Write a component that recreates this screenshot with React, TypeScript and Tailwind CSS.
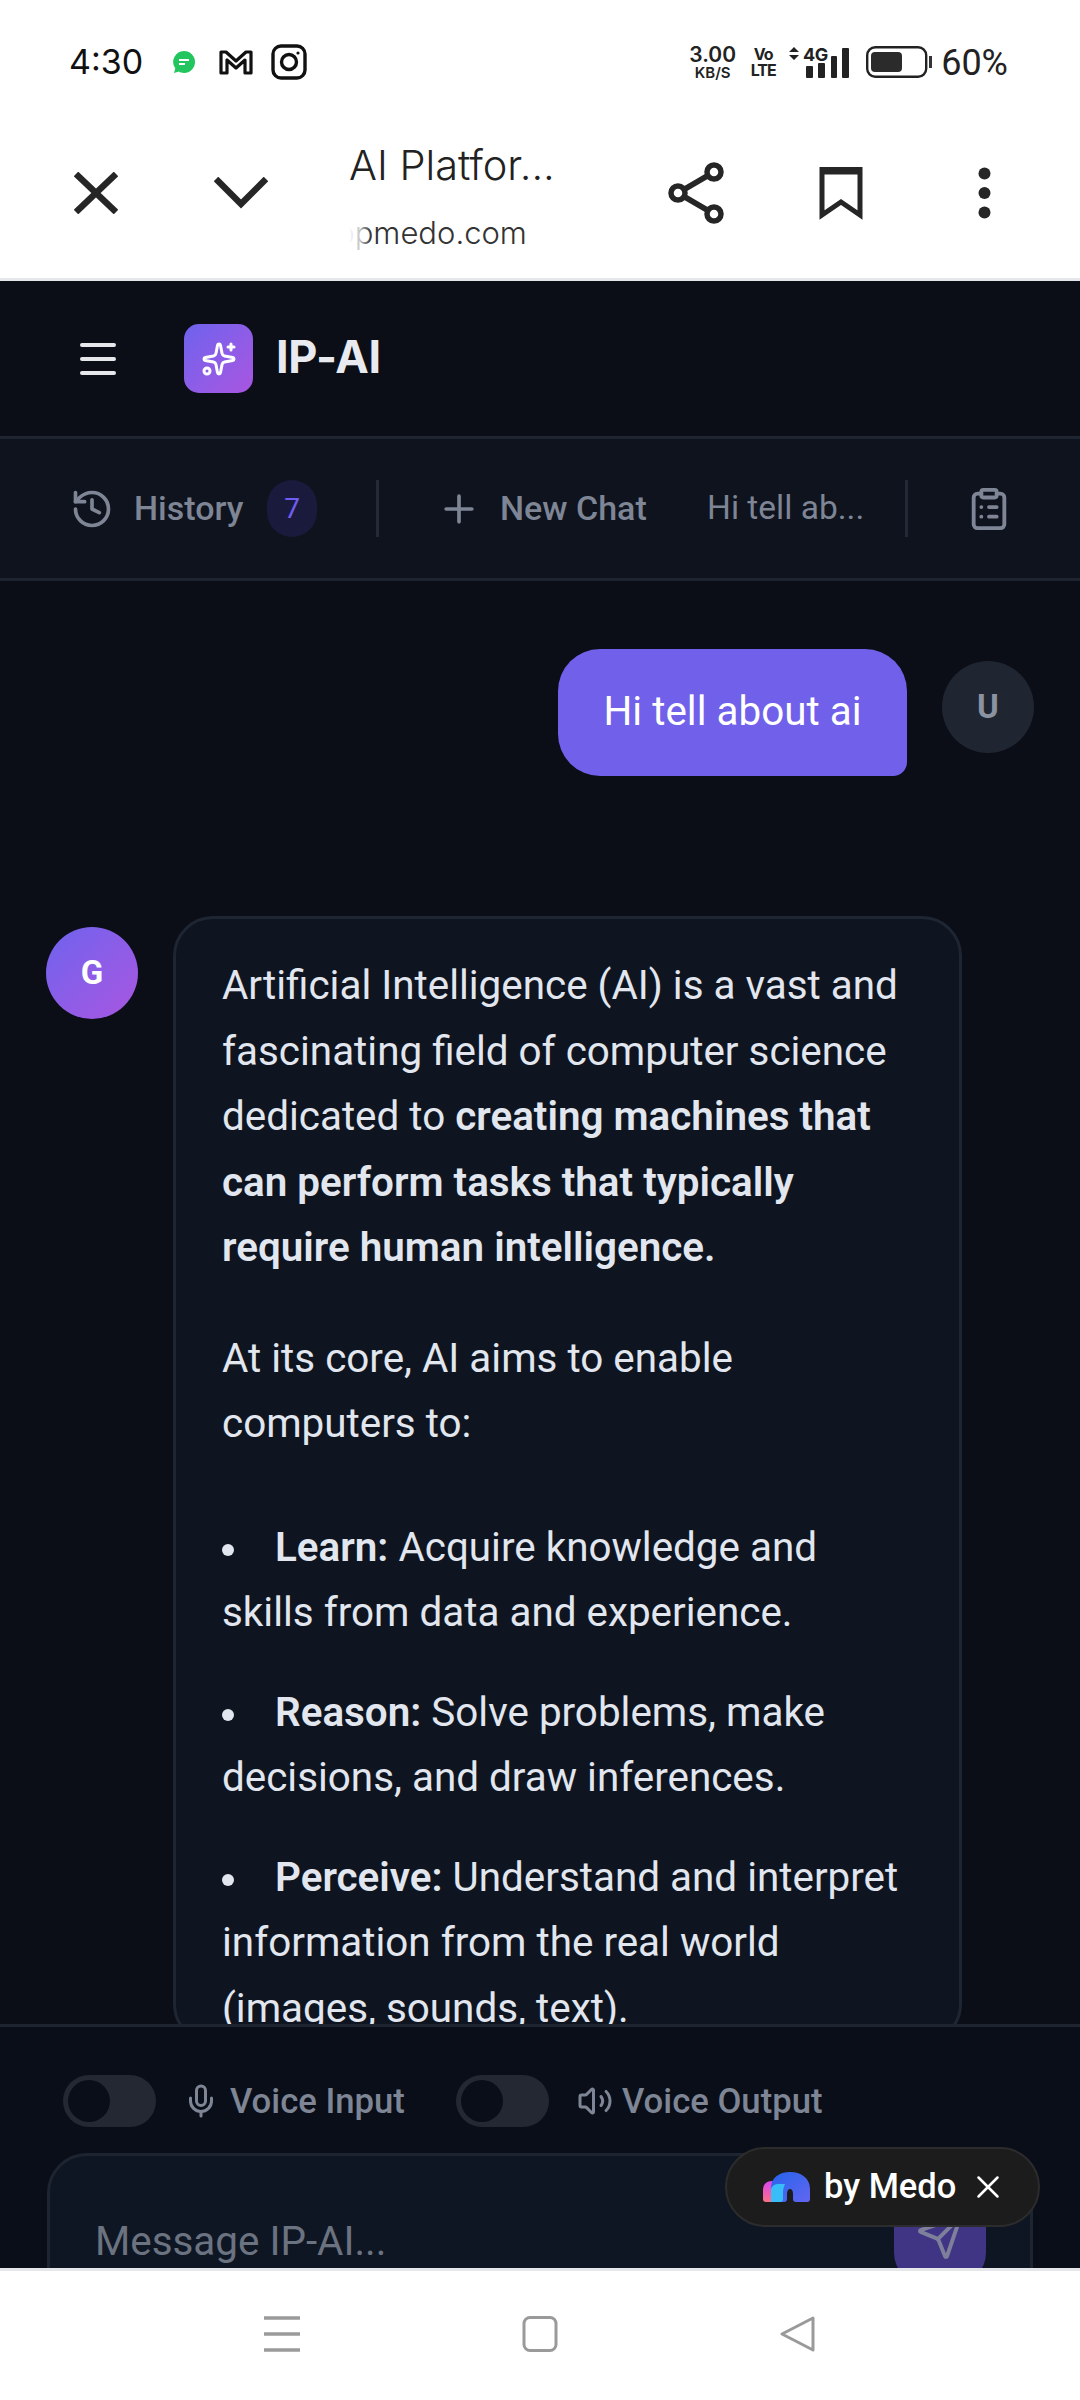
import React from "react";
import { History, Plus, ClipboardList, Mic, Volume2, Send, X, Menu, Sparkles } from "lucide-react";

function StatusBar() {
  return (
    <div className="h-[125px] pt-[42px] pl-[69px] pr-[72px] flex items-start justify-between [font-family:Inter,sans-serif] text-[#111]">
      <div className="flex items-center h-[40px]">
        <span className="text-[34px] leading-[40px] w-[103px]">4:30</span>
        <svg width="24" height="24" viewBox="0 0 24 24" className="mr-[23px]">
          <path d="M12 1a11 11 0 0 1 0 22c-2 0-4-.4-5-1.4L2 23l1.3-4.6A11 11 0 0 1 12 1z" fill="#22c55e" />
          <path d="M7 10h10M7 14h6" stroke="#fff" strokeWidth="2" />
        </svg>
        <svg width="34" height="26" viewBox="0 0 34 26" fill="none" stroke="#111" strokeWidth="3.2" strokeLinejoin="round" className="mr-[18px]">
          <path d="M2 24V3h5l10 9 10-9h5v21h-6V11l-9 8-9-8v13z" />
        </svg>
        <svg width="36" height="36" viewBox="0 0 36 36" fill="none" stroke="#111" strokeWidth="3.4">
          <rect x="2" y="2" width="32" height="32" rx="8" />
          <circle cx="18" cy="18" r="7.5" />
          <circle cx="27" cy="9" r="1.6" fill="#111" stroke="none" />
        </svg>
      </div>
      <div className="flex items-center h-[40px] text-[#222]">
        <div className="flex flex-col items-center w-[49px] mr-[15px] font-semibold">
          <span className="text-[21px] leading-[20px]">3.00</span>
          <span className="text-[15px] leading-[15px]">KB/S</span>
        </div>
        <div className="flex flex-col items-center w-[22px] mr-[15px] font-bold text-[16px] leading-[16px] tracking-[-1px]">
          <span>Vo</span>
          <span>LTE</span>
        </div>
        <svg width="60" height="32" viewBox="0 0 60 32" className="mr-[17px]" fill="#222">
          <path d="M0 6 5 1 10 6zM0 9 5 14 10 9z" />
          <text x="14" y="15" fontSize="18" fontWeight="700" fontFamily="Inter" letterSpacing="-0.5">4G</text>
          <rect x="17" y="20" width="7" height="12" rx="1" />
          <rect x="29" y="17" width="7" height="15" rx="1" />
          <rect x="42" y="10" width="6" height="22" rx="1" />
          <rect x="53" y="2" width="7" height="30" rx="1" />
        </svg>
        <svg width="66" height="32" viewBox="0 0 66 32" className="mr-[9px]" fill="none">
          <rect x="1.2" y="1.2" width="59" height="29.6" rx="8" stroke="#222" strokeWidth="2.4" />
          <rect x="5" y="6" width="31" height="20" rx="4" fill="#2b2b2b" />
          <rect x="63" y="10" width="3" height="12" fill="#333" />
        </svg>
        <span className="text-[36px] leading-[40px] font-normal mt-[2px] [font-family:Roboto,sans-serif]">60%</span>
      </div>
    </div>
  );
}

function BrowserBar() {
  return (
    <div className="h-[156px] shrink-0 flex items-center pl-[74px] pb-[8px] border-b-[3px] border-[#e5e7eb] [font-family:Inter,sans-serif]">
      <svg width="44" height="42" viewBox="0 0 44 42" fill="none" stroke="#262626" strokeWidth="6.5" className="-mt-[9px]">
        <path d="M2 2 42 40M42 2 2 40" />
      </svg>
      <svg width="54" height="32" viewBox="0 0 54 32" fill="none" stroke="#262626" strokeWidth="6.5" className="ml-[96px] -mt-[9px]">
        <path d="M2 2 27 27 52 2" />
      </svg>
      <div className="ml-[81px] w-[206px] relative overflow-hidden">
        <div className="text-[41.5px] leading-[50px] font-light text-[#222] whitespace-nowrap -mt-[3px]">AI Platfor...</div>
        <div className="text-[31px] leading-[40px] font-light text-[#333] whitespace-nowrap mt-[23px] -ml-[13px]">ppmedo.com</div>
        <div className="absolute left-0 bottom-0 w-[22px] h-[40px] bg-gradient-to-r from-white via-white/70 to-transparent" />
      </div>
      <svg width="56" height="60" viewBox="0 0 56 60" fill="none" stroke="#262626" strokeWidth="5.5" className="ml-[114px] -mt-[9px] overflow-visible">
        <circle cx="45" cy="9" r="7" />
        <circle cx="9" cy="30" r="7" />
        <circle cx="45" cy="51" r="7" />
        <path d="M15 26.5 39 12.5M15 33.5 39 47.5" />
      </svg>
      <svg width="44" height="54" viewBox="0 0 44 54" fill="none" stroke="#262626" strokeWidth="5" className="ml-[94px] -mt-[9px]">
        <path d="M3 3.5H41V49L22 36 3 49Z" />
        <path d="M3 5H41" strokeWidth="7" />
      </svg>
      <svg width="13" height="52" viewBox="0 0 13 52" fill="#262626" className="ml-[115px] -mt-[9px]">
        <circle cx="6.5" cy="6.5" r="6" />
        <circle cx="6.5" cy="26" r="6" />
        <circle cx="6.5" cy="45.5" r="6" />
      </svg>
    </div>
  );
}

function AppHeader() {
  return (
    <div className="h-[158px] shrink-0 border-b-[3px] border-[#1e2430] bg-[#0b0e17] flex items-center pl-[74px]">
      <Menu size={48} strokeWidth={2} className="text-[#e5e7eb] mr-[62px]" />
      <div className="w-[69px] h-[69px] rounded-[15px] bg-gradient-to-br from-[#6d62ee] to-[#a855e0] flex items-center justify-center mr-[23px]">
        <Sparkles size={36} strokeWidth={2} className="text-white" />
      </div>
      <span className="text-[45px] font-bold text-[#e8eaf0] [font-family:Inter,sans-serif] tracking-[-0.4px] -mt-[3px]">IP-AI</span>
    </div>
  );
}

function ToolBar() {
  return (
    <div className="h-[142px] shrink-0 border-b-[3px] border-[#1e2430] bg-[#0e131e] flex items-center pl-[70px] text-[#7e8595] [font-family:Roboto,sans-serif] font-medium text-[34px]">
      <History size={44} strokeWidth={2} className="mr-[20px]" />
      <span className="w-[111px] mr-[22px]">History</span>
      <div className="w-[50px] h-[57px] rounded-full bg-[#1a1b3c] text-[#6f5df2] flex items-center justify-center text-[28px] font-normal mr-[59px]">7</div>
      <div className="w-[3px] h-[57px] bg-[#232936] mr-[64px]" />
      <Plus size={44} strokeWidth={2} className="mr-[19px] -ml-[6px]" />
      <span className="w-[148px] whitespace-nowrap mr-[59px]">New Chat</span>
      <span className="w-[157px] whitespace-nowrap font-normal text-[33.5px] mr-[41px]">Hi tell ab...</span>
      <div className="w-[3px] h-[57px] bg-[#232936] mr-[58px]" />
      <ClipboardList size={46} strokeWidth={2} />
    </div>
  );
}

function Dot() {
  return <span className="inline-block w-[12px] h-[12px] rounded-full bg-[#e2e6ef] mr-[41px] align-[5px]" />;
}

function ChatArea() {
  return (
    <div className="flex-1 min-h-0 overflow-hidden bg-[#0b0d17] text-[#e2e6ef] [font-family:Roboto,sans-serif]">
      <div className="flex justify-end items-start pt-[68px] pr-[46px]">
        <div className="w-[349px] h-[127px] rounded-[42px] rounded-br-[14px] bg-[#7060ea] text-white text-[40.4px] flex items-center justify-center">Hi tell about ai</div>
        <div className="w-[92px] h-[92px] rounded-full ml-[35px] mt-[12px] bg-[#1f2631] text-[#8b92a0] font-bold text-[33px] flex items-center justify-center">U</div>
      </div>
      <div className="flex items-start pt-[140px] pl-[46px]">
        <div className="w-[92px] h-[92px] rounded-full mt-[11px] mr-[35px] bg-gradient-to-br from-[#6d62ee] to-[#a855e0] text-white font-bold text-[33px] flex items-center justify-center">G</div>
        <div className="w-[789px] rounded-[40px] border-[3px] border-[#1f2633] bg-[#0e1520] pl-[46px] pr-[52px] pt-[34px] text-[40.4px] leading-[65.5px]">
          <p>Artificial Intelligence (AI) is a vast and fascinating field of computer science dedicated to <b className="font-semibold">creating machines that can perform tasks that typically require human intelligence.</b></p>
          <p className="mt-[45px]">At its core, AI aims to enable computers to:</p>
          <ul className="mt-[58px] space-y-[34px]">
            <li><Dot /><b className="font-semibold">Learn:</b> Acquire knowledge and skills from data and experience.</li>
            <li><Dot /><b className="font-semibold">Reason:</b> Solve problems, make decisions, and draw inferences.</li>
            <li><Dot /><b className="font-semibold">Perceive:</b> Understand and interpret information from the real world (images, sounds, text).</li>
          </ul>
        </div>
      </div>
    </div>
  );
}

function Toggle() {
  return (
    <div className="w-[93px] h-[52px] shrink-0 rounded-full bg-[#232833] p-[5px]">
      <div className="w-[42px] h-[42px] rounded-full bg-[#0a0e18]" />
    </div>
  );
}

function Composer() {
  return (
    <div className="h-[244px] shrink-0 border-t-[3px] border-[#1e2430] bg-[#0a0e18] overflow-hidden [font-family:Roboto,sans-serif] relative">
      <div className="flex items-center pt-[48px] pl-[63px] text-[#7e8595] font-medium text-[34.7px] whitespace-nowrap">
        <Toggle />
        <Mic size={36} strokeWidth={2} className="ml-[27px] mr-[11px]" />
        <span className="w-[174px]">Voice Input</span>
        <div className="ml-[52px]"><Toggle /></div>
        <Volume2 size={36} strokeWidth={2} className="ml-[28px] mr-[9px]" />
        <span>Voice Output</span>
      </div>
      <div className="mt-[26px] mx-[47px] h-[200px] rounded-[40px] border-[3px] border-[#1e2430] bg-[#0e1623] pl-[45px] pt-[56px] pr-[44px] flex justify-between items-start">
        <span className="text-[#6b7280] text-[40.4px] leading-[60px] font-normal whitespace-nowrap">Message IP-AI...</span>
        <div className="w-[92px] h-[92px] rounded-[30px] bg-[#3f3584] flex items-center justify-center -mt-[21px]">
          <Send size={48} strokeWidth={2} className="text-[#7e7f9a]" />
        </div>
      </div>
      <div className="absolute left-[725px] top-[120px] w-[315px] h-[80px] rounded-full bg-[#1c1c1c] border-[2px] border-[#2c2c2c] flex items-center pl-[36px] text-white text-[34.5px] font-medium">
        <svg width="48" height="30" viewBox="0 0 48 30" className="mr-[13px]">
          <defs>
            <linearGradient id="medoA" x1="0" y1="0" x2="0" y2="1">
              <stop offset="0" stopColor="#d946ef" />
              <stop offset="1" stopColor="#fb7185" />
            </linearGradient>
            <linearGradient id="medoB" x1="0" y1="0" x2="1" y2="1">
              <stop offset="0" stopColor="#2563eb" />
              <stop offset="1" stopColor="#6366f1" />
            </linearGradient>
          </defs>
          <path d="M0 27V18c0-6 4-9 9-9h4v21H3a3 3 0 0 1-3-3z" fill="url(#medoA)" />
          <path d="M8 30V16C8 6 16 0 27 0s20 6 20 17v10a3 3 0 0 1-3 3H33c-2 0-3-1-3-3v-5c0-3-1-5-3-5s-3 2-3 5v5c0 2-1 3-3 3z" fill="url(#medoB)" />
          <path d="M8 30V18c0-3 3-6 7-6h7c-1 3-2 5-2 8v7c0 2-1 3-3 3z" fill="#38bdf8" />
        </svg>
        <span className="whitespace-nowrap">by Medo</span>
        <X size={38} strokeWidth={1.6} className="ml-[13px]" />
      </div>
    </div>
  );
}

function NavBar() {
  return (
    <div className="h-[132px] shrink-0 bg-white border-t-[3px] border-[#e5e7eb] flex items-start">
      <svg width="36" height="36" viewBox="0 0 36 36" className="ml-[264px] mt-[45px]" stroke="#9a9a9a" strokeWidth="3.5">
        <path d="M0 2h36M0 18h36M0 34h36" />
      </svg>
      <svg width="36" height="36" viewBox="0 0 36 36" className="ml-[222px] mt-[45px]" fill="none" stroke="#9a9a9a" strokeWidth="3">
        <rect x="2" y="1.5" width="32" height="33" rx="6" />
      </svg>
      <svg width="36" height="36" viewBox="0 0 36 36" className="ml-[222px] mt-[45px]" fill="none" stroke="#9a9a9a" strokeWidth="3" strokeLinejoin="round">
        <path d="M33 2 2 18l31 16z" />
      </svg>
    </div>
  );
}

export default function App() {
  return (
    <div className="w-[1080px] h-[2400px] bg-white flex flex-col overflow-hidden">
      <StatusBar />
      <BrowserBar />
      <AppHeader />
      <ToolBar />
      <ChatArea />
      <Composer />
      <NavBar />
    </div>
  );
}
